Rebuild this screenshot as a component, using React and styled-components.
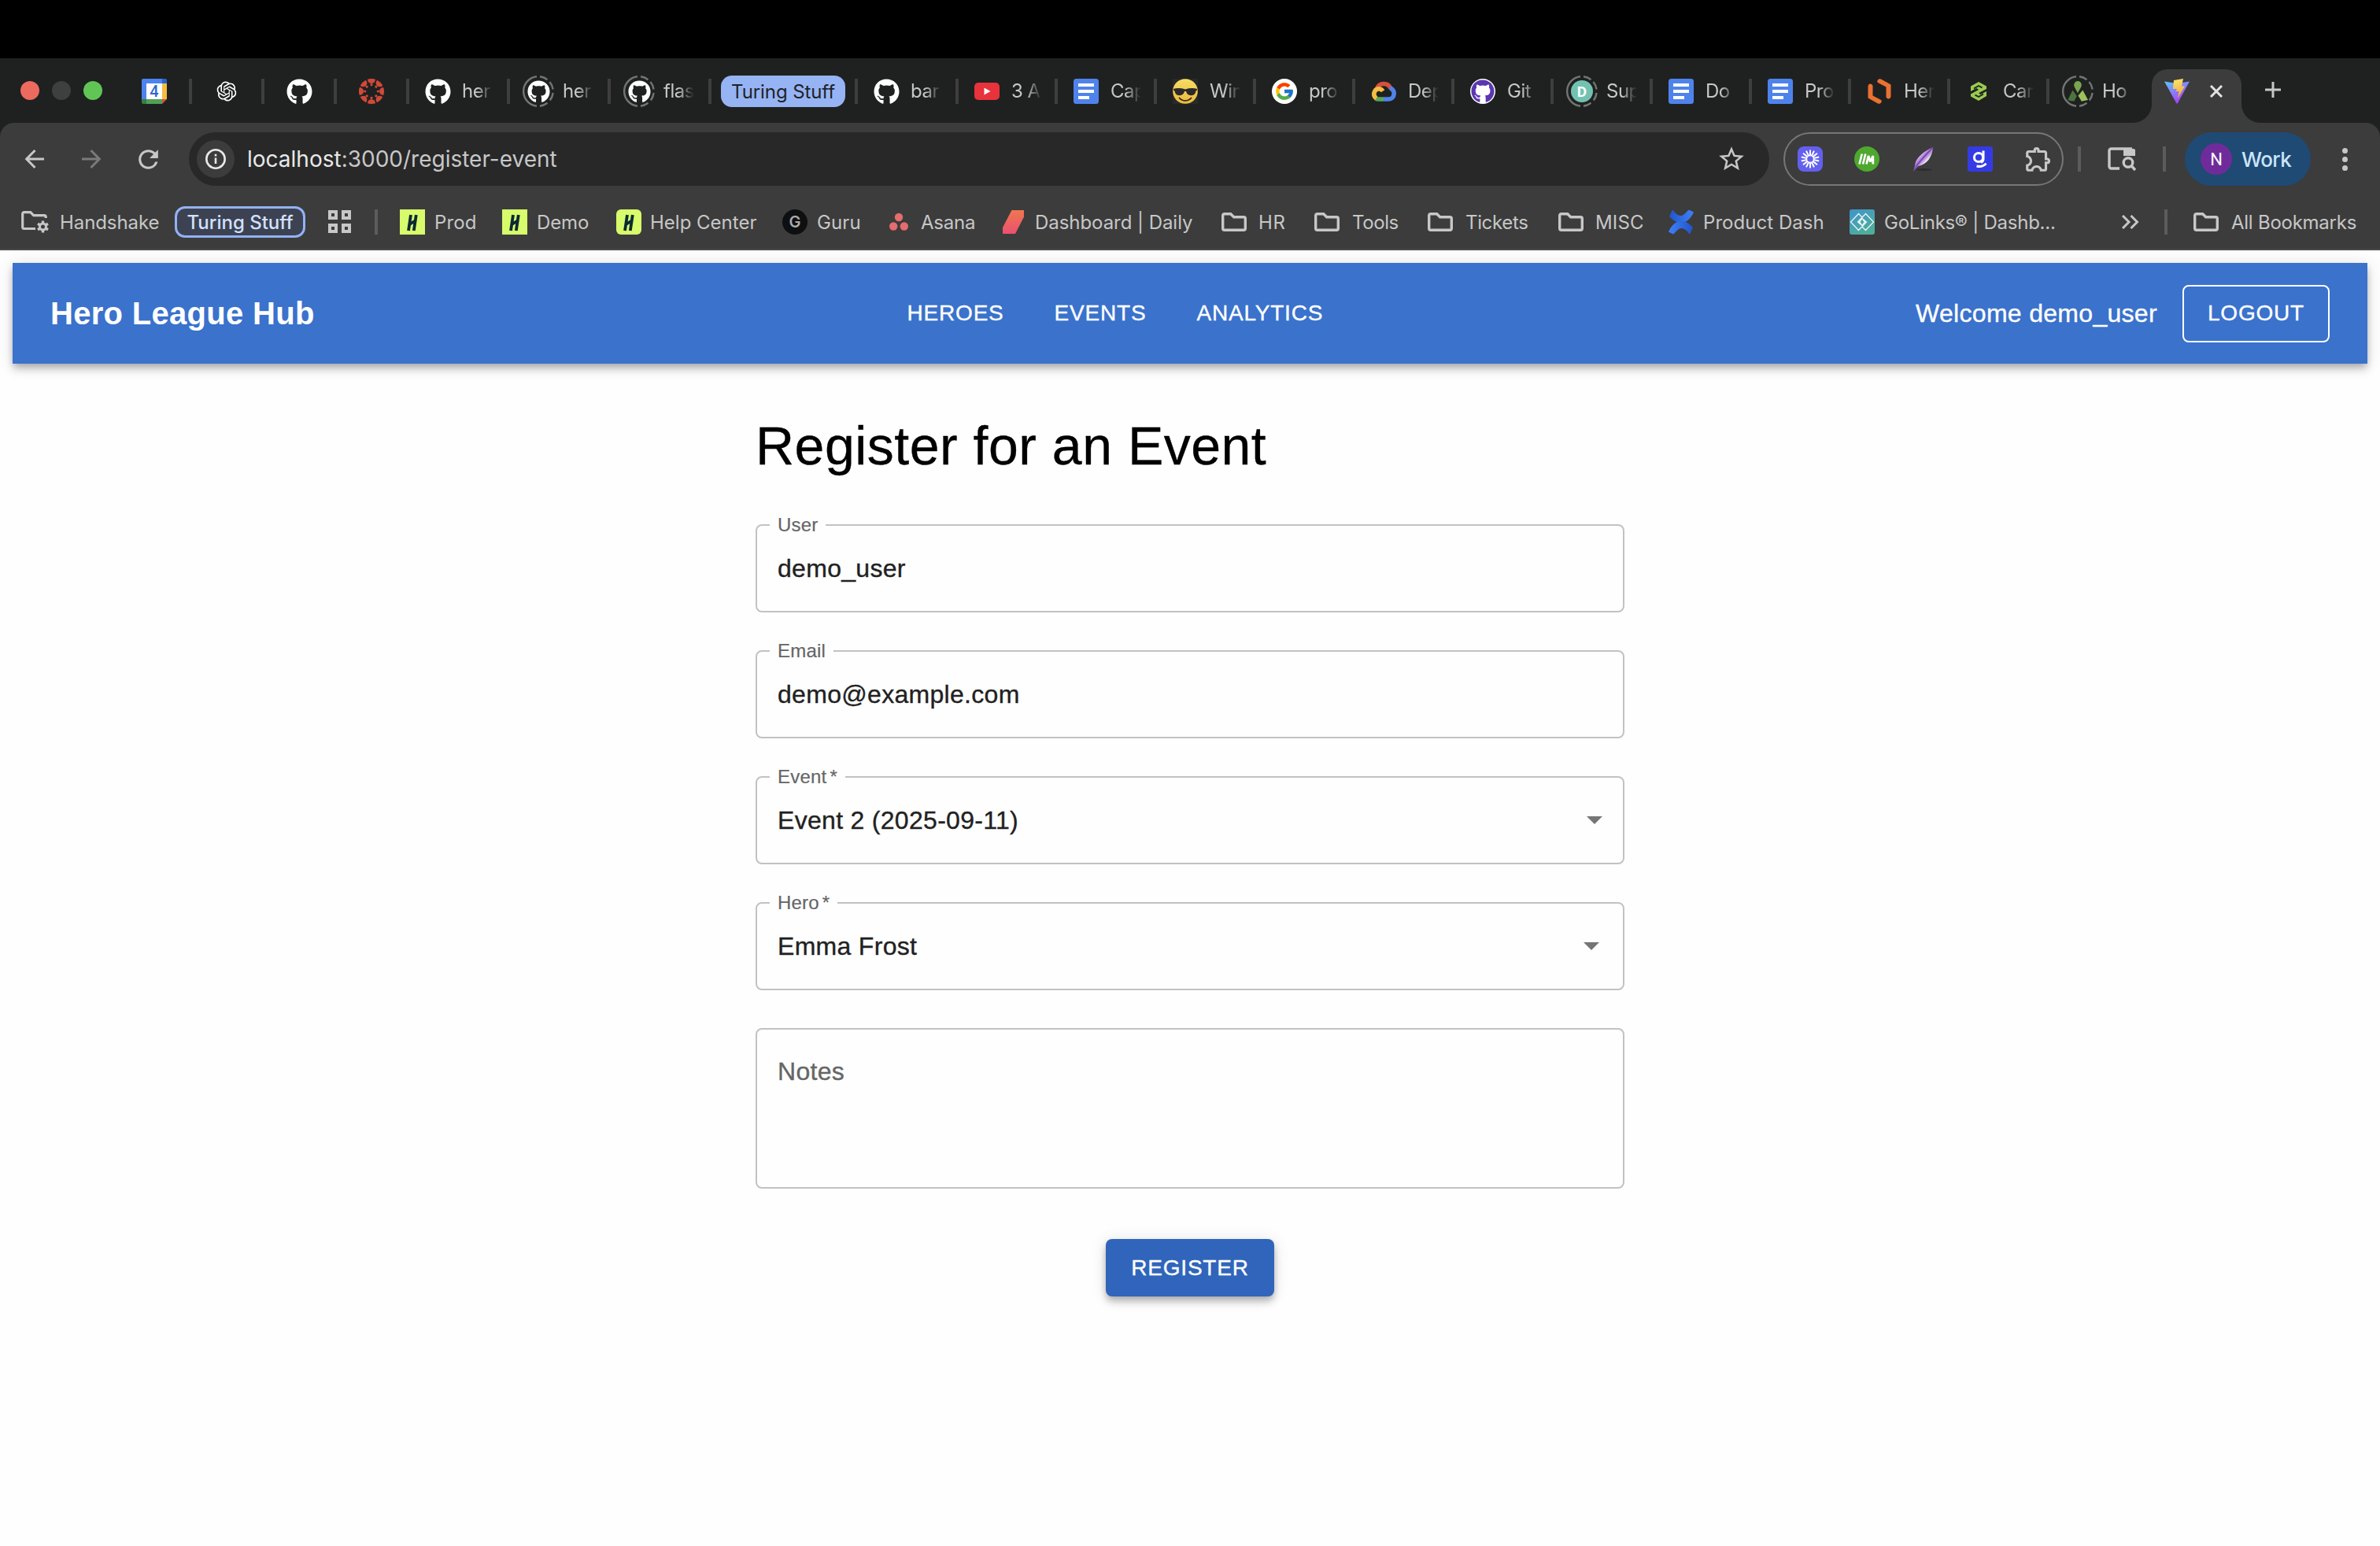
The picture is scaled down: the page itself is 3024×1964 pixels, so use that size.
import React from "react";
import styled, { createGlobalStyle, css } from "styled-components";
import { FaGithub } from "react-icons/fa";
import { FcGoogle } from "react-icons/fc";
import { RiOpenaiFill } from "react-icons/ri";
import { MdOutlineExtension, MdStarBorder, MdRefresh } from "react-icons/md";

const ui = `Inter, "Liberation Sans", sans-serif`;
const body = `"Liberation Sans", Arial, sans-serif`;

const GlobalStyle = createGlobalStyle`
  *, *::before, *::after { box-sizing: border-box; }
  html, body { margin: 0; background: #fefefe; }
  body { font-family: ${body}; overflow: hidden; }
  svg { display: block; flex: none; }
`;

const Screen = styled.div`
  width: 3024px;
  height: 1964px;
  display: flex;
  flex-direction: column;
  background: #fefefe;
`;

const Notch = styled.div`
  height: 74px;
  background: #000;
`;

/* ---------- tab strip ---------- */

const TabStrip = styled.div`
  height: 82px;
  display: flex;
  align-items: flex-end;
  background: #1f2120;
  font-family: ${ui};
  font-size: 24px;
  color: #c7c7c7;
`;

const StripRow = styled.div`
  height: 80px;
  display: flex;
  align-items: center;
`;

const Lights = styled.div`
  width: 152px;
  padding: 0 0 2px 26px;
  display: flex;
  gap: 16px;
`;

const Light = styled.span`
  width: 24px;
  height: 24px;
  border-radius: 50%;
  background: ${(p) => p.$color};
`;

const Tab = styled.div`
  width: ${(p) => p.$w}px;
  height: 32px;
  display: flex;
  align-items: center;
  ${(p) => p.$pinned ? css`justify-content: center;` : css`padding-left: 20px;`}
  border-right: ${(p) => (p.$last ? "0" : "4px solid #3d3e3d")};
`;

const Favicon = styled.span`
  width: 32px;
  height: 32px;
  flex: none;
  display: flex;
  align-items: center;
  justify-content: center;
  position: relative;
`;

const RingSvg = styled.svg`
  position: absolute;
  left: -4px;
  top: -4px;
`;

const TabText = styled.span`
  margin-left: 15px;
  width: 38px;
  height: 32px;
  line-height: 32px;
  overflow: hidden;
  white-space: nowrap;
  letter-spacing: -0.5px;
  mask-image: linear-gradient(90deg, #000 50%, rgba(0,0,0,.1) 96%);
`;

const GroupPill = styled.div`
  width: 158px;
  height: 40px;
  margin: 0 12px;
  border-radius: 14px;
  background: #96b4f4;
  color: #1f2226;
  display: flex;
  align-items: center;
  justify-content: center;
  white-space: nowrap;
  letter-spacing: -0.1px;
`;

const Divider = styled.span`
  width: 4px;
  height: 32px;
  flex: none;
  background: ${(p) => p.$color};
  margin: ${(p) => p.$m || 0};
`;

const ActiveTab = styled.div`
  width: 114px;
  height: 68px;
  padding-left: 16px;
  display: flex;
  align-items: center;
  gap: 26px;
  padding-bottom: 12px;
  align-self: flex-end;
  background: #3c3c3c;
  border-radius: 20px 20px 0 0;
  position: relative;
  &::before, &::after {
    content: "";
    position: absolute;
    bottom: 0;
    width: 24px;
    height: 24px;
  }
  &::before {
    left: -24px;
    background: radial-gradient(circle at 0 0, transparent 23.5px, #3c3c3c 24.5px);
  }
  &::after {
    right: -24px;
    background: radial-gradient(circle at 100% 0, transparent 23.5px, #3c3c3c 24.5px);
  }
`;

const NewTab = styled.span`
  margin: 0 0 4px 30px;
`;

/* ---------- toolbar ---------- */

const Corners = styled.div`
  background: #1f2120;
`;

const Chrome = styled.div`
  height: 162px;
  background: #3c3c3c;
  border-radius: 18px 18px 0 0;
  border-bottom: 2px solid #4b494b;
  font-family: ${ui};
  color: #c7c7c7;
`;

const Toolbar = styled.div`
  height: 92px;
  padding: 0 41px 0 28px;
  display: flex;
  align-items: center;
`;

const NavButtons = styled.div`
  width: 212px;
  display: flex;
  align-items: center;
  gap: 40px;
  svg:last-child { margin-left: -2px; }
`;

const AddressBar = styled.div`
  width: 2008px;
  height: 68px;
  padding: 0 29px 0 10px;
  border-radius: 34px;
  background: #282828;
  display: flex;
  align-items: center;
`;

const InfoDot = styled.span`
  width: 48px;
  height: 48px;
  border-radius: 50%;
  background: #3c3c3c;
  display: flex;
  align-items: center;
  justify-content: center;
`;

const Url = styled.span`
  flex: 1;
  margin-left: 16px;
  font-size: 28px;
  color: #c7c7c7;
  b { font-weight: 400; color: #e8e8e8; }
`;

const Extensions = styled.div`
  width: 356px;
  height: 68px;
  margin-left: 18px;
  padding-left: 16px;
  border: 2px solid #777;
  border-radius: 34px;
  display: flex;
  align-items: center;
  gap: 40px;
  svg:last-child { margin-left: -1px; }
`;

const Profile = styled.div`
  width: 160px;
  height: 68px;
  margin-left: 24px;
  padding-left: 20px;
  border-radius: 34px;
  background: #1f4a73;
  display: flex;
  align-items: center;
  gap: 12px;
  font-size: 26px;
  font-weight: 500;
  letter-spacing: -0.6px;
  color: #cbe5fd;
`;

const Avatar = styled.span`
  width: 40px;
  height: 40px;
  border-radius: 50%;
  background: #702b9b;
  color: #fff;
  font-family: Roboto, sans-serif;
  font-weight: 400;
  font-size: 22px;
  letter-spacing: 0;
  display: flex;
  align-items: center;
  justify-content: center;
`;

const Menu = styled.span`
  margin-left: 40px;
  width: 7px;
  display: flex;
  flex-direction: column;
  gap: 4px;
  i { width: 7px; height: 7px; border-radius: 50%; background: #c7c7c7; }
`;

/* ---------- bookmarks ---------- */

const Bookmarks = styled.div`
  height: 68px;
  display: flex;
  align-items: center;
  font-size: 24px;
`;

const Bookmark = styled.span`
  display: flex;
  align-items: center;
  width: ${(p) => p.$w}px;
  padding-left: ${(p) => p.$pl || 0}px;
  flex: none;
`;

const BookmarkText = styled.span`
  margin-left: ${(p) => p.$gap}px;
  white-space: nowrap;
  letter-spacing: ${(p) => p.$ls || 0}px;
`;

const SavedGroup = styled.div`
  width: 166px;
  height: 40px;
  margin-right: 29px;
  border: 3px solid #92b2f5;
  border-radius: 13px;
  background: #3c4252;
  color: #d3e0fb;
  font-weight: 500;
  white-space: nowrap;
  display: flex;
  align-items: center;
  justify-content: center;
`;

/* ---------- page ---------- */

const Page = styled.div`
  padding: 16px;
  -webkit-text-stroke: 0.35px currentColor;
`;

const AppBar = styled.header`
  height: 128px;
  padding: 0 48px;
  display: flex;
  align-items: center;
  justify-content: space-between;
  background: #3a72cc;
  color: #fff;
  box-shadow: 0 4px 8px -2px rgba(0,0,0,.2), 0 8px 10px 0 rgba(0,0,0,.14), 0 2px 20px 0 rgba(0,0,0,.12);
`;

const Account = styled.div`
  display: flex;
  align-items: center;
  gap: 32px;
`;

const Brand = styled.span`
  font-size: 40px;
  font-weight: 700;
  letter-spacing: 0.3px;
  -webkit-text-stroke: 0;
`;

const NavLinks = styled.nav`
  display: flex;
  gap: 64px;
  font-size: 28px;
  letter-spacing: 0.8px;
`;

const Welcome = styled.span`
  font-size: 32px;
  letter-spacing: 0.3px;
`;

const Button = styled.button`
  height: 73px;
  padding: 0 ${(p) => (p.$outlined ? 30 : 32)}px;
  border-radius: 8px;
  font: 400 28px ${body};
  letter-spacing: 0.8px;
  color: #fff;
  ${(p) => p.$outlined ? css`
    border: 2px solid #fff;
    background: transparent;
  ` : css`
    border: 0;
    background: #3065bb;
    box-shadow: 0 4px 8px -2px rgba(0,0,0,.2), 0 8px 10px 0 rgba(0,0,0,.14), 0 2px 20px 0 rgba(0,0,0,.12);
  `}
`;

const Form = styled.form`
  width: 1104px;
  margin: 62px auto 0;
  display: flex;
  flex-direction: column;
`;

const Title = styled.h1`
  margin: 0 0 47px;
  height: 84px;
  line-height: 84px;
  font-size: 68px;
  font-weight: 400;
  letter-spacing: 0.5px;
  color: #000;
`;

const Field = styled.fieldset`
  height: ${(p) => p.$h}px;
  margin: 0 0 ${(p) => p.$mb || 37}px;
  padding: 0 ${(p) => p.$right || 26}px 0 16px;
  border: 2px solid #c2c2c2;
  border-radius: 8px;
  min-width: 0;
`;

const Label = styled.legend`
  height: 24px;
  line-height: 23px;
  padding: 0 10px;
  font-size: 24px;
  letter-spacing: 0.2px;
  color: #666;
  -webkit-text-stroke: 0.2px currentColor;
  sup { font-size: inherit; vertical-align: baseline; margin-left: 4px; }
`;

const Value = styled.div`
  height: ${(p) => p.$h || 86}px;
  padding-left: 10px;
  display: flex;
  align-items: center;
  justify-content: space-between;
  font-size: 32px;
  letter-spacing: 0.3px;
  color: ${(p) => p.$color || "#212121"};
`;

const Actions = styled.div`
  display: flex;
  justify-content: center;
`;

/* ---------- icons ---------- */

const Github = () => <FaGithub size={33} color="#fff" />;

const Ring = ({ children }) => (
  <Favicon>
    <RingSvg width="40" height="40" viewBox="0 0 40 40" fill="none" stroke="#727472" strokeWidth="2.4">
      <path d="M18 1.3A18.8 18.8 0 0 0 18 38.7" />
      <path d="M22 1.3A18.8 18.8 0 0 1 31.5 5.2M34.4 8A18.8 18.8 0 0 1 38.6 17.5M38.6 22A18.8 18.8 0 0 1 34.8 31.4M31.5 34.8A18.8 18.8 0 0 1 22 38.7" />
    </RingSvg>
    {children}
  </Favicon>
);

const Calendar = () => (
  <svg width="32" height="32" viewBox="0 0 32 32">
    <path d="M2 0h24v6H6v20H0V2a2 2 0 0 1 2-2z" fill="#4c83ee" />
    <path d="M26 0h4a2 2 0 0 1 2 2v4h-6z" fill="#2a62cf" />
    <path d="M26 6h6v20h-6z" fill="#f3bc42" />
    <path d="M6 26h20v6H6z" fill="#509f55" />
    <path d="M0 26h6v6H2a2 2 0 0 1-2-2z" fill="#387f3f" />
    <path d="M26 26h6l-6 6z" fill="#d95040" />
    <path d="M6 6h20v20H6z" fill="#fff" />
    <text x="16" y="23.2" textAnchor="middle" fontFamily="Roboto" fontWeight="500" fontSize="20" fill="#2f66d0">4</text>
  </svg>
);

const Canvas = () => (
  <svg width="32" height="32" viewBox="-16 -16 32 32" fill="#d0493a">
    {[0, 45, 90, 135, 180, 225, 270, 315].map((a) => (
      <g key={a} transform={`rotate(${a})`}>
        <path d="M-5 -15.200a16 16 0 0 1 10 0a5 5.200 0 0 1-10 0z" />
        <circle cy="-8.300" r="1.600" />
      </g>
    ))}
  </svg>
);

const Youtube = () => (
  <svg width="32" height="22" viewBox="0 0 32 22">
    <rect width="32" height="22" rx="5" fill="#e8323c" />
    <path d="M12.5 6.5v9l8-4.5z" fill="#fff" />
  </svg>
);

const Docs = () => (
  <svg width="32" height="32" viewBox="0 0 32 32">
    <rect width="32" height="32" rx="3.5" fill="#4f83ec" />
    <path d="M6 6h20v4H6zM6 14h20v4H6zM6 22h14v4H6z" fill="#fff" />
  </svg>
);

const Cool = () => (
  <svg width="32" height="32" viewBox="0 0 32 32">
    <defs>
      <linearGradient id="face" x1="0" y1="0" x2="0" y2="1">
        <stop offset="0" stopColor="#f8dc63" /><stop offset="1" stopColor="#e9b93f" />
      </linearGradient>
    </defs>
    <rect width="32" height="32" fill="#282a29" />
    <circle cx="16" cy="16" r="15.8" fill="url(#face)" />
    <path d="M.8 13c5-1.6 10-1 15.200.4 5-1.400 10-2 15.200-.4l-.6 2c-1 0-1.200 1-1.800 3-.8 2.500-3 3.200-5.600 3.200-3.600 0-5.400-2-6.200-5.200h-2c-.8 3.200-2.600 5.200-6.200 5.200-2.600 0-4.800-.7-5.600-3.200-.6-2-.8-3-1.800-3z" fill="#2b2a2a" />
    <path d="M8.500 24.500c4 4.600 11 4.600 15 0" fill="none" stroke="#3a2a14" strokeWidth="1.800" strokeLinecap="round" />
  </svg>
);

const Google = () => (
  <svg width="32" height="32" viewBox="0 0 32 32">
    <circle cx="16" cy="16" r="16" fill="#fff" />
    <FcGoogle x="3" y="3" size={26} />
  </svg>
);

const Cloud = () => (
  <svg width="32" height="26" viewBox="0 0 32 26" fill="none" strokeWidth="5.600">
    <path d="M7.500 9.500A9.300 9.300 0 0 1 24.800 9.200" stroke="#d8503f" />
    <path d="M24 8.500c3.500 1.600 5.200 4.200 5.200 7.200 0 4.200-3 7.300-7.200 7.300h-6" stroke="#4f83ec" />
    <path d="M16 23H9.500c-1.500 0-2.600-.3-3.600-1" stroke="#56a65a" />
    <path d="M6.800 22A6.700 6.700 0 0 1 9.500 9.800c2.600 0 4.300 1 5.600 3" stroke="#f3bc42" />
  </svg>
);

const GitPurple = () => (
  <svg width="32" height="32" viewBox="0 0 32 32">
    <circle cx="16" cy="16" r="16" fill="#fff" />
    <FaGithub x="1" y="1" size={30} color="#5b36b0" />
  </svg>
);

const DCircle = () => (
  <svg width="28" height="28" viewBox="0 0 28 28">
    <circle cx="14" cy="14" r="14" fill="#73c2b1" />
    <text x="14" y="20.800" textAnchor="middle" fontFamily="Roboto" fontWeight="700" fontSize="19" fill="#fff">D</text>
  </svg>
);

const OrangeHex = () => (
  <svg width="30" height="32" viewBox="0 0 30 32">
    <path d="M0.500 9.500Q1 6.500 3.500 6.500T6.500 9V21.500L17 27Q18.500 28.500 17 30.500T13 31.500L0.500 24.500z" fill="#e97132" />
    <path d="M29.500 22.500Q29 25.500 26.500 25.500T23.500 23V10.500L13 5Q11.500 3.500 13 1.500T17 .5L29.500 7.500z" fill="#e97132" />
  </svg>
);

const GreenHex = () => (
  <svg width="20" height="24" viewBox="0 0 20 24" fill="#9acb50">
    <path d="M10 0 20 5.500V9L10 14.200 12.500 16 20 12V18L10 24 0 18.500V15.500L10 10 7.500 8 0 12V5.500z" />
    <path d="M4 8.500 10 5l4.500 2.400M16 15.500 10 19l-4.500-2.400" stroke="#1f2120" strokeWidth="1.800" fill="none" />
  </svg>
);

const GreenLeaves = () => (
  <svg width="28" height="28" viewBox="0 0 28 28">
    <path d="M14 1a4.800 4.800 0 0 1 4.800 4.800C18.800 9 16 12 14 16.500 12 12 9.200 9 9.200 5.800A4.800 4.800 0 0 1 14 1z" fill="#78a64f" />
    <path d="M7.500 12.500 12.800 20 9.500 26.500Q5 26.500 1.300 25z" fill="#4e743e" />
    <path d="M20.300 12.500 27 25 18.800 26.800 14.500 19.500z" fill="#9bc15b" />
  </svg>
);

const Vite = () => (
  <svg width="32" height="32" viewBox="0 0 32 32">
    <defs>
      <linearGradient id="va" x1="0" y1="0" x2=".6" y2="1">
        <stop offset="0" stopColor="#59c8fb" /><stop offset="1" stopColor="#b03af5" />
      </linearGradient>
      <linearGradient id="vb" x1=".4" y1="0" x2=".6" y2="1">
        <stop offset="0" stopColor="#fbe36a" /><stop offset="1" stopColor="#f0a23c" />
      </linearGradient>
    </defs>
    <path d="M0 3.500 16 6 32 3.500 16.800 31.200a.8.8 0 0 1-1.400 0z" fill="url(#va)" />
    <path d="M12 2 24 0 22 9.500H26L17 25 18.500 16H14.500L16 13H11z" fill="url(#vb)" />
  </svg>
);

const Stroke = ({ w = 24, h = 24, sw = 3, color = "#c7c7c7", d }) => (
  <svg width={w} height={h} viewBox={`0 0 ${w} ${h}`} fill="none" stroke={color} strokeWidth={sw}>
    <path d={d} />
  </svg>
);

const Folder = () => <Stroke w={32} h={24} sw={3.400} d="M1.700 3.700a2 2 0 0 1 2-2h8l4 4h12.600a2 2 0 0 1 2 2v12.600a2 2 0 0 1-2 2H3.700a2 2 0 0 1-2-2z" />;

const FolderGear = () => (
  <svg width="36" height="28" viewBox="0 0 36 28" fill="none" stroke="#c7c7c7" strokeWidth="3.200">
    <path d="M18 22.500H3.700a2 2 0 0 1-2-2V3.600a2 2 0 0 1 2-2h8l4 4h13.500a2 2 0 0 1 2 2V9" />
    <circle cx="27.500" cy="20" r="4" strokeWidth="3" />
    <path d="M27.500 12.500v3M27.500 24.500v3M21 16.300l2.600 1.500M31.400 22.200l2.600 1.500M21 23.700l2.600-1.500M31.400 17.800l2.600-1.500" strokeWidth="3.400" />
  </svg>
);

const Handshake = ({ round }) => (
  <svg width="32" height="32" viewBox="0 0 32 32">
    <rect width="32" height="32" rx={round ? 6 : 0} fill="#d8fb6b" />
    <g stroke="#0b2a33" strokeWidth="3.800" fill="none">
      <path d="M14 7 11 27M20.800 7 17.800 27M12.500 19 19.500 14.500" />
    </g>
  </svg>
);

const Guru = () => (
  <svg width="32" height="32" viewBox="0 0 32 32">
    <circle cx="16" cy="16" r="16" fill="#0e0f11" />
    <text x="16" y="23" textAnchor="middle" fontFamily="Inter" fontWeight="600" fontSize="20" fill="#a9a9aa">G</text>
  </svg>
);

const Asana = () => (
  <svg width="24" height="24" viewBox="0 0 24 24" fill="#e46d6d">
    <circle cx="12" cy="6" r="5.200" /><circle cx="5.200" cy="17.500" r="5.200" /><circle cx="18.800" cy="17.500" r="5.200" />
  </svg>
);

const Daily = () => (
  <svg width="28" height="32" viewBox="0 0 28 32">
    <defs><linearGradient id="dl" x1="0" y1="0" x2="0" y2="1"><stop offset="0" stopColor="#f07750" /><stop offset="1" stopColor="#ea5071" /></linearGradient></defs>
    <path d="M11.500 1H27V9.500L16 31H0V23z" fill="url(#dl)" />
  </svg>
);

const Confluence = () => (
  <svg width="32" height="32" viewBox="0 0 32 32">
    <defs>
      <linearGradient id="cf" x1="0" y1="0" x2="1" y2="0"><stop offset="0" stopColor="#2155cc" /><stop offset="1" stopColor="#3f80f7" /></linearGradient>
      <linearGradient id="cg" x1="0" y1="0" x2="1" y2="0"><stop offset="0" stopColor="#3f80f7" /><stop offset="1" stopColor="#2155cc" /></linearGradient>
    </defs>
    <path d="M5 .5C8 4 11 8 15.500 8 20 8 22 3 26 0.500L32 3.500C28 12 23 17 15.500 17 9 17 5 13 1 9z" fill="url(#cf)" />
    <path d="M27 31.500C24 28 21 24 16.500 24 12 24 10 29 6 31.500L0 28.500C4 20 9 15 16.500 15 23 15 27 19 31 23z" fill="url(#cg)" />
  </svg>
);

const GoLinks = () => (
  <svg width="32" height="32" viewBox="0 0 32 32">
    <defs><linearGradient id="gl" x1="0" y1="0" x2="0.600" y2="1"><stop offset="0" stopColor="#3f93cc" /><stop offset="1" stopColor="#4fae9b" /></linearGradient></defs>
    <rect width="32" height="32" rx="3" fill="url(#gl)" />
    <path d="M16 10 11.500 5.500 1.500 16l10 10.500L21.500 16 16 11.500 12.500 16 15 18.500M16 22l4.500 4.500L30.500 16l-10-10.500L10.500 16 16 20.500 19.500 16 17 13.500" fill="none" stroke="#e8f6f5" strokeWidth="1.300" />
  </svg>
);

const Burst = () => (
  <svg width="32" height="32" viewBox="-16 -16 32 32">
    <rect x="-16" y="-16" width="32" height="32" rx="8" fill="#6460ee" />
    <circle r="4.600" fill="none" stroke="#fff" strokeWidth="1.600" />
    {[...Array(14)].map((_, i) => (
      <path key={i} d="M0-5V-11.500" stroke="#fff" strokeWidth="2" transform={`rotate(${(i * 360) / 14})`} />
    ))}
  </svg>
);

const ImBadge = () => (
  <svg width="32" height="32" viewBox="0 0 32 32">
    <circle cx="16" cy="16" r="16" fill="#4ea82f" />
    <path d="M6.500 22.500 9.800 9.500M11 22.500 14.300 9.500" fill="none" stroke="#fff" strokeWidth="2.600" />
    <path d="M15.500 22.500 18 12 20.300 19.500 23.800 12V22.500" fill="none" stroke="#fff" strokeWidth="2.800" strokeLinejoin="bevel" />
  </svg>
);

const Feather = () => (
  <svg width="32" height="32" viewBox="0 0 32 32">
    <defs><linearGradient id="ft" x1="0.200" y1="0.100" x2=".8" y2=".8"><stop offset="0.250" stopColor="#e6dcf2" /><stop offset=".5" stopColor="#9a62cb" /><stop offset=".72" stopColor="#e9e2f3" /></linearGradient></defs>
    <ellipse cx="17" cy="29.500" rx="10" ry="1.500" fill="#2c2c2c" />
    <path d="M28 1C17 6 6 14 5 24L3.500 31 9 25C20 23 27 14 28 1z" fill="url(#ft)" />
    <path d="M3.500 31C9 21 17 12 28 1" stroke="#7a3db3" strokeWidth="1.300" fill="none" />
  </svg>
);

const GBadge = () => (
  <svg width="32" height="32" viewBox="0 0 32 32" fill="none" stroke="#fff" strokeWidth="3">
    <rect width="32" height="32" rx="3" fill="#353be4" stroke="none" />
    <circle cx="14" cy="14" r="5.600" />
    <path d="M20 5.500V16c0 2-1.200 3.500-3 4.500M11.500 25c5 1.200 9 0 12-3.200" />
  </svg>
);

const SearchPanel = () => (
  <svg width="36" height="32" viewBox="0 0 36 32" fill="none" stroke="#c7c7c7" strokeWidth="3.400">
    <path d="M15 28H4.500a2.500 2.500 0 0 1-2.500-2.500v-20A2.500 2.500 0 0 1 4.500 3H31" />
    <path d="M20 3h13a2 2 0 0 1 2 2v7H20z" fill="#c7c7c7" stroke="none" />
    <circle cx="26" cy="20.500" r="5.800" />
    <path d="M30 24.500 35 30" />
  </svg>
);

const Caret = styled.span`
  width: 20px;
  height: 10px;
  background: #757575;
  clip-path: polygon(0 0, 100% 0, 50% 100%);
`;

/* ---------- data ---------- */

const pinned = [
  <Calendar />, <RiOpenaiFill size={30} color="#fff" />, <Github />, <Canvas />,
];

const firstTabs = [
  { w: 128, icon: <Github />, text: "her" },
  { w: 128, ring: true, icon: <FaGithub size={29} color="#fff" />, text: "her" },
  { w: 128, ring: true, icon: <FaGithub size={29} color="#fff" />, text: "flas" },
];

const moreTabs = [
  { w: 128, icon: <Github />, text: "bar" },
  { w: 126, icon: <Youtube />, text: "3 A" },
  { w: 126, icon: <Docs />, text: "Cap" },
  { w: 126, icon: <Cool />, text: "Win" },
  { w: 126, icon: <Google />, text: "pro" },
  { w: 126, icon: <Cloud />, text: "Dep" },
  { w: 126, icon: <GitPurple />, text: "Git" },
  { w: 126, ring: true, icon: <DCircle />, text: "Sup" },
  { w: 126, icon: <Docs />, text: "Do" },
  { w: 126, icon: <Docs />, text: "Pro" },
  { w: 126, icon: <OrangeHex />, text: "Her" },
  { w: 126, icon: <GreenHex />, text: "Can" },
  { w: 130, ring: true, icon: <GreenLeaves />, text: "Ho", last: true },
];

const bookmarks = [
  { w: 130, gap: 12, icon: <Handshake />, text: "Prod", ls: 0.1 },
  { w: 145, gap: 12, icon: <Handshake />, text: "Demo", ls: -0.1 },
  { w: 211, gap: 11, icon: <Handshake round />, text: "Help Center" },
  { w: 136, gap: 12, icon: <Guru />, text: "Guru", ls: 0.1 },
  { w: 144, gap: 16, icon: <Asana />, text: "Asana", ls: -0.2 },
  { w: 278, gap: 13, icon: <Daily />, text: "Dashboard | Daily", ls: -0.05 },
  { w: 118, gap: 15, icon: <Folder />, text: "HR", ls: 0.6 },
  { w: 144, gap: 16, icon: <Folder />, text: "Tools", ls: -0.4 },
  { w: 166, gap: 16, icon: <Folder />, text: "Tickets", ls: -0.35 },
  { w: 140, gap: 15, icon: <Folder />, text: "MISC", ls: 0.15 },
  { w: 230, gap: 12, icon: <Confluence />, text: "Product Dash", ls: 0.05 },
  { w: 346, gap: 12, icon: <GoLinks />, text: "GoLinks® | Dashb...", ls: -0.24 },
];

const TabItem = ({ w, ring, icon, text, last }) => (
  <Tab $w={w} $last={last}>
    {ring ? <Ring>{icon}</Ring> : <Favicon>{icon}</Favicon>}
    <TabText>{text}</TabText>
  </Tab>
);

export default function App() {
  return (
    <Screen>
      <GlobalStyle />
      <Notch />
      <TabStrip>
        <StripRow>
          <Lights>
            <Light $color="#ed6a5f" />
            <Light $color="#3e403f" />
            <Light $color="#61c555" />
          </Lights>
          {pinned.map((icon, i) => (
            <Tab key={i} $w={92} $pinned><Favicon>{icon}</Favicon></Tab>
          ))}
          {firstTabs.map((t, i) => <TabItem key={i} {...t} />)}
          <GroupPill>Turing Stuff</GroupPill>
          <Divider $color="#3d3e3d" />
          {moreTabs.map((t, i) => <TabItem key={i} {...t} />)}
          <ActiveTab>
            <Vite />
            <Stroke w={16} h={16} sw={3} color="#e3e3e3" d="M1 1 15 15M15 1 1 15" />
          </ActiveTab>
          <NewTab><Stroke w={20} h={20} sw={3} d="M10 0V20M0 10H20" /></NewTab>
        </StripRow>
      </TabStrip>
      <Corners>
        <Chrome>
          <Toolbar>
            <NavButtons>
              <Stroke w={32} h={32} sw={3} d="M28 16H6M16.500 5 5.700 16 16.500 27" />
              <Stroke w={32} h={32} sw={3} color="#7a7a7a" d="M4 16H26M15.500 5 26.300 16 15.500 27" />
              <MdRefresh size={37} color="#c7c7c7" />
            </NavButtons>
            <AddressBar>
              <InfoDot>
                <svg width="26" height="26" viewBox="0 0 26 26" fill="none" stroke="#e8e8e8" strokeWidth="2.600">
                  <circle cx="13" cy="13" r="11.700" />
                  <path d="M13 11.500V19M13 6.800V9.400" />
                </svg>
              </InfoDot>
              <Url><b>localhost</b>:3000/register-event</Url>
              <MdStarBorder size={38} color="#c7c7c7" />
            </AddressBar>
            <Extensions>
              <Burst /><ImBadge /><Feather /><GBadge /><MdOutlineExtension size={38} color="#c7c7c7" />
            </Extensions>
            <Divider $color="#5c5c5c" $m="0 34px 0 18px" />
            <SearchPanel />
            <Divider $color="#5c5c5c" $m="0 0 0 34px" />
            <Profile><Avatar>N</Avatar>Work</Profile>
            <Menu><i /><i /><i /></Menu>
          </Toolbar>
          <Bookmarks>
            <Bookmark $w={222} $pl={27}>
              <FolderGear /><BookmarkText $gap={13} $ls={-0.08}>Handshake</BookmarkText>
            </Bookmark>
            <SavedGroup>Turing Stuff</SavedGroup>
            <Stroke w={30} h={30} sw={4} d="M2 2h8v8H2zM19 2h8v8h-8zM2 19h8v8H2zM19 19h8v8h-8z" />
            <Divider $color="#5c5c5c" $m="0 28px 0 29px" />
            {bookmarks.map((b) => (
              <Bookmark key={b.text} $w={b.w}>{b.icon}<BookmarkText $gap={b.gap} $ls={b.ls}>{b.text}</BookmarkText></Bookmark>
            ))}
            <Stroke w={22} h={18} sw={3} d="M1 1 9 9 1 17M11.500 1 19.500 9 11.500 17" />
            <Divider $color="#5c5c5c" $m="0 33px 0 32px" />
            <Bookmark $w={210}><Folder /><BookmarkText $gap={16} $ls={-0.25}>All Bookmarks</BookmarkText></Bookmark>
          </Bookmarks>
        </Chrome>
      </Corners>

      <Page>
        <AppBar>
          <Brand>Hero League Hub</Brand>
          <NavLinks><span>HEROES</span><span>EVENTS</span><span>ANALYTICS</span></NavLinks>
          <Account>
            <Welcome>Welcome demo_user</Welcome>
            <Button $outlined>LOGOUT</Button>
          </Account>
        </AppBar>
        <Form>
          <Title>Register for an Event</Title>
          <Field $h={123}><Label>User</Label><Value>demo_user</Value></Field>
          <Field $h={123}><Label>Email</Label><Value>demo@example.com</Value></Field>
          <Field $h={123} $right={26}><Label>Event<sup>*</sup></Label><Value>Event 2 (2025-09-11)<Caret /></Value></Field>
          <Field $h={123} $right={30} $mb={48}><Label>Hero<sup>*</sup></Label><Value>Emma Frost<Caret /></Value></Field>
          <Field as="div" $h={204} $mb={64}><Value $h={106} $color="#666">Notes</Value></Field>
          <Actions><Button type="button">REGISTER</Button></Actions>
        </Form>
      </Page>
    </Screen>
  );
}
